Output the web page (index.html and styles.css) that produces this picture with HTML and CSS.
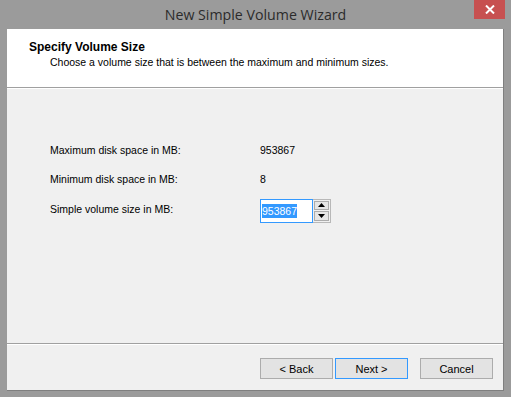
FILE: index.html
```html
<!DOCTYPE html>
<html lang="en">
<head>
    <meta charset="UTF-8">
    <title>New Simple Volume Wizard</title>
    <link rel="stylesheet" href="styles.css">
</head>
<body>
    <div class="window">
        <div class="titlebar">
            <span></span>
            <div class="title">New Simple Volume Wizard</div>
            <div class="close">
                <svg width="10" height="9" viewBox="0 0 10 9"><path d="M1 0.5 L9 8.5 M9 0.5 L1 8.5" stroke="#fff" stroke-width="2"/></svg>
            </div>
        </div>
        <div class="client">
            <div class="header">
                <div class="header-title">Specify Volume Size</div>
                <div class="header-sub">Choose a volume size that is between the maximum and minimum sizes.</div>
            </div>
            <div class="content">
                <div class="row">
                    <span class="label">Maximum disk space in MB:</span>
                    <span class="value">953867</span>
                </div>
                <div class="row">
                    <span class="label">Minimum disk space in MB:</span>
                    <span class="value">8</span>
                </div>
                <div class="row row-input">
                    <span class="label">Simple volume size in MB:</span>
                    <div class="spin">
                        <div class="spin-field"><span class="selected">953867</span></div>
                        <div class="spin-buttons">
                            <div class="spin-btn"><svg width="7" height="4" viewBox="0 0 7 4"><path d="M3.5 0 L7 4 L0 4 Z" fill="#000"/></svg></div>
                            <div class="spin-btn"><svg width="7" height="4" viewBox="0 0 7 4"><path d="M0 0 L7 0 L3.5 4 Z" fill="#000"/></svg></div>
                        </div>
                    </div>
                </div>
            </div>
            <div class="footer">
                <button class="btn">&lt; Back</button>
                <button class="btn btn-default">Next &gt;</button>
                <button class="btn btn-cancel">Cancel</button>
            </div>
        </div>
    </div>
</body>
</html>
```

FILE: styles.css
```css
body {
    margin: 0;
    font-family: "Liberation Sans", Arial, sans-serif;
    font-size: 10.5px;
    color: #000;
}
.window {
    width: 511px;
    height: 397px;
    background: #9b9b9b;
    display: flex;
    flex-direction: column;
    box-sizing: border-box;
    padding-bottom: 6px;
}
.titlebar {
    height: 29px;
    display: grid;
    grid-template-columns: 37px 1fr 37px;
    align-items: start;
    flex-shrink: 0;
}
.title {
    text-align: center;
    font-family: "Open Sans", "Noto Sans", sans-serif;
    font-size: 14.2px;
    line-height: 29px;
    color: #2b2b2b;
}
.close {
    width: 31px;
    height: 19px;
    background: #c75050;
    display: flex;
    align-items: center;
    justify-content: center;
}
.client {
    flex: 1;
    margin: 0 7px;
    background: #f0f0f0;
    border-right: 1px solid #7f7f7f;
    border-bottom: 1px solid #7f7f7f;
    display: flex;
    flex-direction: column;
}
.header {
    height: 47px;
    background: #fff;
    border-bottom: 1px solid #a0a0a0;
    box-shadow: 0 1px 0 #fff;
    padding: 11px 0 0 22px;
    flex-shrink: 0;
}
.header-title {
    font-weight: bold;
    font-size: 12px;
    line-height: 13px;
    margin-top: 1px;
}
.header-sub {
    padding-left: 21px;
    line-height: 13px;
    margin-top: 2px;
}
.content {
    flex: 1;
    padding: 56px 0 0 43px;
}
.row {
    display: flex;
    height: 29px;
}
.label {
    width: 210px;
}
.row-input {
    margin-top: -8px;
    align-items: center;
}
.spin {
    display: flex;
    align-items: center;
    margin-top: 4px;
}
.spin-field {
    width: 53px;
    height: 24px;
    border: 1px solid #3399ff;
    background: #fff;
    display: flex;
    align-items: center;
    padding-left: 1px;
    box-sizing: border-box;
}
.selected {
    background: #3399ff;
    color: #fff;
    line-height: 14px;
}
.spin-buttons {
    display: flex;
    flex-direction: column;
    gap: 1px;
    padding: 1px;
    box-sizing: border-box;
    border: 1px solid #b8b8b8;
    border-left: none;
    height: 24px;
}
.spin-btn {
    width: 15px;
    height: 10px;
    background: #e6e6e6;
    border: 1px solid #acacac;
    box-sizing: border-box;
    display: flex;
    align-items: center;
    justify-content: center;
}
.footer {
    height: 47px;
    flex-shrink: 0;
    border-top: 1px solid #a0a0a0;
    box-shadow: inset 0 1px 0 #fff;
    display: flex;
    align-items: flex-start;
    padding: 14px 0 0 253px;
    box-sizing: border-box;
}
.btn {
    width: 73px;
    height: 21px;
    font-family: "Liberation Sans", Arial, sans-serif;
    font-size: 11px;
    background: #e3e3e3;
    border: 1px solid #acacac;
    color: #000;
    padding: 0;
}
.btn-default {
    border-color: #3399ff;
    margin-left: 2px;
}
.btn-cancel {
    margin-left: 12px;
}
```
